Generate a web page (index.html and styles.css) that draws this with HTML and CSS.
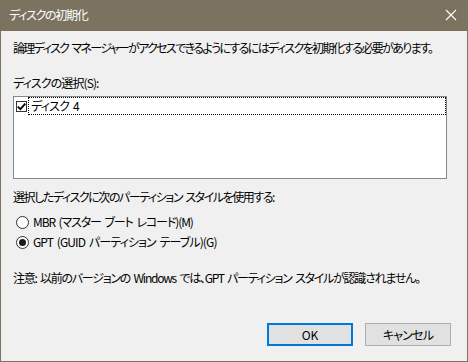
FILE: index.html
```html
<!DOCTYPE html>
<html lang="ja">
<head>
<meta charset="utf-8">
<link rel="stylesheet" href="styles.css">
</head>
<body>
<div class="window">
  <div class="titlebar">
    <span class="title">ディスクの初期化</span>
    <svg class="close" width="12" height="12" viewBox="0 0 12 12"><path d="M1 1 L11 11 M11 1 L1 11" stroke="#ffffff" stroke-width="1.1" fill="none"/></svg>
  </div>
  <div class="content">
    <p class="intro">論理ディスク マネージャーがアクセスできるようにするにはディスクを初期化する必要があります。</p>
    <p class="label">ディスクの選択(S):</p>
    <div class="listbox">
      <div class="item">
        <span class="check"><svg width="9" height="9" viewBox="0 0 9 9"><path d="M0.8 4.6 L3.4 7.2 L8.3 1.6" stroke="#000" stroke-width="1.8" fill="none"/></svg></span>
        <span class="focus">ディスク 4</span>
      </div>
    </div>
    <p class="label2">選択したディスクに次のパーティション スタイルを使用する:</p>
    <div class="radio-row first"><span class="radio"></span><span class="mbr">MBR (マスター ブート レコード)(M)</span></div>
    <div class="radio-row"><span class="radio on"></span><span class="gpt">GPT (GUID パーティション テーブル)(G)</span></div>
    <p class="note">注意: 以前のバージョンの Windows では、GPT パーティション スタイルが認識されません。</p>
    <div class="buttons">
      <button class="btn default">OK</button>
      <button class="btn cancel">キャンセル</button>
    </div>
  </div>
</div>
</body>
</html>
```
FILE: styles.css
```css
* { box-sizing: border-box; }
html, body { margin: 0; padding: 0; }
body {
  width: 468px;
  height: 362px;
  overflow: hidden;
  font-family: "Noto Sans CJK JP", "Noto Sans", sans-serif;
  font-size: 12px;
  font-feature-settings: "palt";
  color: #000;
  word-spacing: 2px;
}
.window {
  width: 468px;
  height: 362px;
  background: #7b7260;
  padding: 0 1px 1px 1px;
  display: flex;
  flex-direction: column;
}
.titlebar {
  height: 31px;
  flex: 0 0 31px;
  display: flex;
  align-items: center;
  justify-content: space-between;
  padding: 0 10px 0 8px;
}
.title {
  color: #ffffff;
  font-size: 12px;
  line-height: 16px;
  margin-top: -1px;
  letter-spacing: -1.3px;
}
.close { margin-top: -1px; }
.content {
  flex: 1;
  min-height: 0;
  background: #f0f0f0;
  padding: 0 0 0 12px;
  display: flex;
  flex-direction: column;
}
p { margin: 0; line-height: 16px; white-space: nowrap; }
.intro { margin-top: 9px; letter-spacing: -1.65px; }
.label { margin-top: 19px; letter-spacing: -0.9px; }
.listbox {
  margin-top: 5px;
  width: 434px;
  height: 83px;
  flex: 0 0 83px;
  background: #fff;
  border: 1px solid #828790;
}
.item {
  display: flex;
  align-items: center;
  height: 18px;
  padding-left: 2px;
}
.check {
  width: 11px;
  height: 11px;
  border: 1px solid #333;
  background: #fff;
  display: flex;
  align-items: center;
  justify-content: center;
}
.focus {
  flex: 1;
  height: 18px;
  margin-left: 1px;
  border: 1px dotted #000;
  line-height: 16px;
  padding-left: 2px;
  letter-spacing: -0.8px;
}
.label2 { margin-top: 10px; letter-spacing: -1.45px; }
.radio-row {
  display: flex;
  align-items: center;
  height: 20px;
  line-height: 16px;
  padding-left: 3px;
  white-space: nowrap;
}
.radio-row.first { margin-top: 7px; }
.mbr { letter-spacing: -1.1px; }
.gpt { letter-spacing: -0.9px; }
.radio {
  width: 13px;
  height: 13px;
  flex: 0 0 13px;
  border: 1px solid #333;
  border-radius: 50%;
  background: #fff;
  margin-right: 4px;
  display: flex;
  align-items: center;
  justify-content: center;
}
.radio.on::after {
  content: "";
  width: 7px;
  height: 7px;
  border-radius: 50%;
  background: #1a1a1a;
}
.note { margin-top: 18px; letter-spacing: -1.25px; }
.buttons {
  margin-top: auto;
  margin-bottom: 15px;
  display: flex;
  justify-content: flex-end;
  gap: 12px;
  padding-right: 16px;
}
.btn {
  width: 86px;
  height: 23px;
  background: #e1e1e1;
  border: 1px solid #adadad;
  font-family: inherit;
  font-size: 12px;
  font-feature-settings: "palt";
  color: #000;
  padding: 0;
  line-height: 16px;
}
.btn.cancel { letter-spacing: -0.8px; }
.btn.default {
  border: 2px solid #0078d7;
}
```
